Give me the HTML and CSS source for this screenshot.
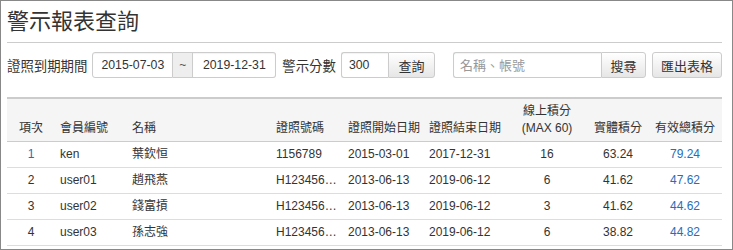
FILE: index.html
```html
<!DOCTYPE html>
<html lang="zh-Hant">
<head>
  <meta charset="UTF-8">
  <title>警示報表查詢</title>
  <link rel="stylesheet" href="styles.css">
</head>
<body>

<div class="page">
  <h1 class="title">警示報表查詢</h1>
  <hr class="divider">

  <form class="toolbar" onsubmit="return false">
    <label class="field-label">證照到期期間</label>
    <div class="input-group">
      <input type="text" class="form-input date" value="2015-07-03">
      <span class="addon">~</span>
      <input type="text" class="form-input date" value="2019-12-31">
    </div>

    <label class="field-label score-label">警示分數</label>
    <div class="input-group">
      <input type="text" class="form-input score" value="300">
      <button type="submit" class="btn btn-query">查詢</button>
    </div>

    <div class="input-group search-group">
      <input type="text" class="form-input keyword" placeholder="名稱、帳號">
      <button type="button" class="btn btn-search">搜尋</button>
    </div>

    <button type="button" class="btn btn-export">匯出表格</button>
  </form>

  <table class="report">
    <colgroup>
      <col style="width: 48px">
      <col style="width: 72px">
      <col style="width: 144px">
      <col style="width: 72px">
      <col style="width: 81px">
      <col style="width: 82px">
      <col style="width: 82px">
      <col style="width: 60px">
      <col style="width: 74px">
    </colgroup>
    <thead>
      <tr>
        <th class="center">項次</th>
        <th>會員編號</th>
        <th>名稱</th>
        <th>證照號碼</th>
        <th>證照開始日期</th>
        <th>證照結束日期</th>
        <th class="center">線上積分<br>(MAX 60)</th>
        <th class="center">實體積分</th>
        <th class="center">有效總積分</th>
      </tr>
    </thead>
    <tbody>
      <tr>
        <td class="center link">1</td>
        <td>ken</td>
        <td>葉欽恒</td>
        <td class="clip">1156789</td>
        <td>2015-03-01</td>
        <td>2017-12-31</td>
        <td class="center">16</td>
        <td class="center">63.24</td>
        <td class="center link">79.24</td>
      </tr>
      <tr>
        <td class="center">2</td>
        <td>user01</td>
        <td>趙飛燕</td>
        <td class="clip">H123456789</td>
        <td>2013-06-13</td>
        <td>2019-06-12</td>
        <td class="center">6</td>
        <td class="center">41.62</td>
        <td class="center link">47.62</td>
      </tr>
      <tr>
        <td class="center">3</td>
        <td>user02</td>
        <td>錢富摃</td>
        <td class="clip">H123456789</td>
        <td>2013-06-13</td>
        <td>2019-06-12</td>
        <td class="center">3</td>
        <td class="center">41.62</td>
        <td class="center link">44.62</td>
      </tr>
      <tr>
        <td class="center">4</td>
        <td>user03</td>
        <td>孫志強</td>
        <td class="clip">H123456789</td>
        <td>2013-06-13</td>
        <td>2019-06-12</td>
        <td class="center">6</td>
        <td class="center">38.82</td>
        <td class="center link">44.82</td>
      </tr>
    </tbody>
  </table>
</div>

</body>
</html>
```

FILE: styles.css
```css
* {
  box-sizing: border-box;
}

html, body {
  margin: 0;
  padding: 0;
  background: #fff;
}

body {
  font-family: "Liberation Sans", "Noto Sans CJK TC", sans-serif;
  color: #333;
}

.page {
  width: 733px;
  height: 250px;
  border: 1px solid #888;
  padding: 0 10px 0 6px;
  overflow: hidden;
}

.title {
  margin: 0;
  padding-top: 6px;
  font-size: 22px;
  line-height: 30px;
  font-weight: normal;
  color: #333;
}

.divider {
  margin: 5px 0 9px;
  border: 0;
  border-top: 1px solid #ccc;
}

/* query bar */
.toolbar {
  display: flex;
  align-items: center;
  height: 26px;
}

.field-label {
  font-size: 13.4px;
  margin-right: 5px;
}

.score-label {
  margin-left: 6px;
}

.input-group {
  display: flex;
  height: 26px;
}

.form-input {
  height: 26px;
  margin: 0;
  padding: 0 7px;
  border: 1px solid #ccc;
  border-radius: 3px;
  font-family: inherit;
  font-size: 12.3px;
  color: #333;
  outline: none;
  box-shadow: inset 0 1px 1px rgba(0,0,0,0.05);
}

.form-input::placeholder {
  color: #999;
}

.form-input.date {
  width: 81px;
  text-align: center;
}

.input-group .form-input.date:first-child {
  border-top-right-radius: 0;
  border-bottom-right-radius: 0;
}

.input-group .form-input.date:last-child {
  width: 83px;
  border-left: 0;
  border-top-left-radius: 0;
  border-bottom-left-radius: 0;
}

.addon {
  width: 20px;
  display: flex;
  align-items: center;
  justify-content: center;
  background: #eee;
  border: 1px solid #ccc;
  border-left: 0;
  font-size: 12px;
  color: #555;
}

.form-input.score {
  width: 47px;
  border-right: 0;
  border-top-right-radius: 0;
  border-bottom-right-radius: 0;
}

.form-input.keyword {
  width: 148px;
  padding-left: 6px;
  border-right: 0;
  border-top-right-radius: 0;
  border-bottom-right-radius: 0;
  font-size: 13px;
}

.search-group {
  margin-left: 18px;
}

.btn {
  height: 26px;
  margin: 0;
  padding: 0;
  border: 1px solid #ccc;
  border-radius: 3px;
  background: linear-gradient(#fff, #e6e6e6);
  font-family: inherit;
  font-size: 13px;
  color: #333;
  cursor: pointer;
}

.btn:hover {
  background: #e6e6e6;
}

.input-group .btn {
  border-top-left-radius: 0;
  border-bottom-left-radius: 0;
}

.btn-query {
  width: 47px;
}

.btn-search {
  width: 45px;
}

.btn-export {
  width: 70px;
  margin-left: 6px;
}

/* report table */
.report {
  width: 715px;
  margin-top: 19px;
  border-collapse: collapse;
  table-layout: fixed;
  font-size: 12px;
}

.report th,
.report td {
  padding: 4px 5px;
  line-height: 17px;
  text-align: left;
  white-space: nowrap;
}

.report thead tr {
  background: #f5f5f5;
  border-top: 2px solid #ccc;
  border-bottom: 1px solid #ccc;
}

.report th {
  font-weight: normal;
  vertical-align: bottom;
}

.report tbody tr {
  border-bottom: 1px solid #ddd;
}

.report .center {
  text-align: center;
}

.report .link {
  color: #2a6db5;
}

.report .clip {
  overflow: hidden;
  text-overflow: ellipsis;
}
```
